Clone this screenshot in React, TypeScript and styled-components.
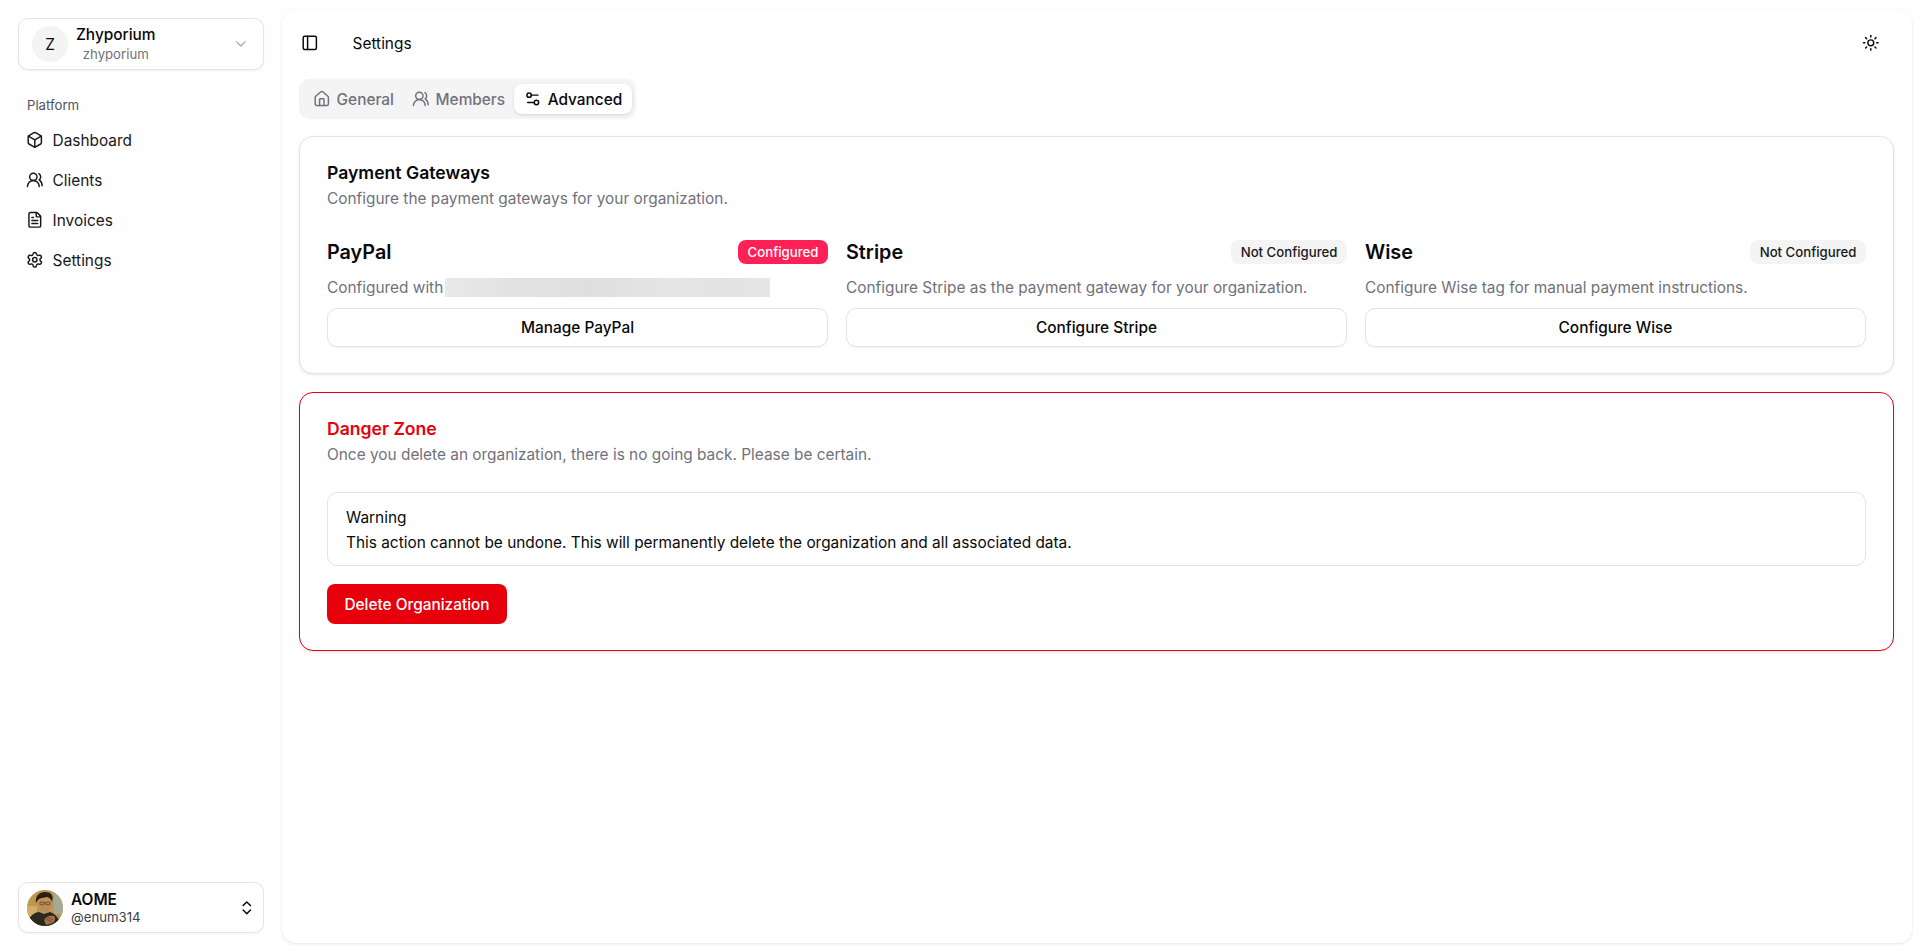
import React from 'react';
import styled, { createGlobalStyle } from 'styled-components';
import {
    Box,
    ChevronDown,
    ChevronsUpDown,
    FileText,
    House,
    PanelLeft,
    Settings,
    Settings2,
    Sun,
    UsersRound,
} from 'lucide-react';

const GlobalStyle = createGlobalStyle`
    html, body {
        margin: 0;
        padding: 0;
        background: #fefefe;
        color: #09090b;
        font-family: Inter, "Liberation Sans", sans-serif;
    }
    * {
        box-sizing: border-box;
    }
`;

const Layout = styled.div`
    display: flex;
    height: 951px;
    overflow: hidden;
`;

const Sidebar = styled.aside`
    width: 282px;
    flex-shrink: 0;
    display: flex;
    flex-direction: column;
    padding: 18px 18px 18px 18px;
`;

const TeamCard = styled.div`
    display: flex;
    align-items: center;
    height: 52px;
    padding: 0 13px;
    background: #fff;
    border: 1px solid #e4e4e7;
    border-radius: 10px;
    box-shadow: 0 1px 2px rgba(0, 0, 0, 0.06);
    color: #a1a1aa;
`;

const TeamAvatar = styled.div`
    width: 36px;
    height: 36px;
    border-radius: 50%;
    background: #f4f4f5;
    color: #09090b;
    display: flex;
    align-items: center;
    justify-content: center;
    font-size: 15.4px;
    flex-shrink: 0;
`;

const TeamText = styled.div`
    display: flex;
    flex-direction: column;
    align-items: center;
    margin-left: 8px;
    flex: 0 0 auto;
`;

const TeamName = styled.div`
    font-size: 15.4px;
    line-height: 20px;
    font-weight: 500;
    color: #09090b;
`;

const TeamSlug = styled.div`
    font-size: 13.2px;
    line-height: 18px;
    color: #71717b;
`;

const PushRight = styled.div`
    margin-left: auto;
    display: flex;
`;

const SectionLabel = styled.div`
    margin: 26px 0 0 9px;
    font-size: 13.2px;
    line-height: 18px;
    color: #52525b;
`;

const NavList = styled.nav`
    display: flex;
    flex-direction: column;
    margin-top: 6px;
`;

const NavItem = styled.a`
    display: flex;
    align-items: center;
    gap: 9px;
    height: 40px;
    padding-left: 8px;
    font-size: 15.4px;
    color: #18181b;
`;

const UserCard = styled.div`
    display: flex;
    align-items: center;
    height: 51px;
    margin-top: auto;
    padding: 0 7px 0 8px;
    background: #fff;
    border: 1px solid #e4e4e7;
    border-radius: 10px;
    box-shadow: 0 1px 2px rgba(0, 0, 0, 0.04);
`;

const UserText = styled.div`
    margin-left: 8px;
`;

const UserName = styled.div`
    font-size: 15.4px;
    line-height: 18px;
    font-weight: 600;
`;

const UserHandle = styled.div`
    font-size: 13.2px;
    line-height: 16px;
    color: #3f3f46;
`;

const Main = styled.main`
    flex: 1;
    margin: 10px 8px 8px 0;
    background: #fff;
    border-radius: 14px;
    box-shadow: 0 1px 3px rgba(0, 0, 0, 0.1);
    padding: 0 18px 0 17px;
    display: flex;
    flex-direction: column;
`;

const Topbar = styled.header`
    display: flex;
    align-items: center;
    height: 66px;
    padding: 0 14px 0 2px;
`;

const PageTitle = styled.div`
    margin-left: 34px;
    font-size: 15.4px;
`;

const TabList = styled.div`
    display: flex;
    align-self: flex-start;
    height: 40px;
    margin-top: 3px;
    padding: 5px 4px 5px 5px;
    background: #f4f4f5;
    border-radius: 10px;
`;

const Tab = styled.button<{ $active?: boolean }>`
    display: flex;
    align-items: center;
    gap: 6px;
    height: 30px;
    padding: 0 ${(p) => (p.$active ? '10px' : '9px')};
    border: 0;
    border-radius: 8px;
    background: ${(p) => (p.$active ? '#fff' : 'transparent')};
    box-shadow: ${(p) => (p.$active ? '0 1px 3px rgba(0,0,0,0.12)' : 'none')};
    color: ${(p) => (p.$active ? '#09090b' : '#71717b')};
    font-family: inherit;
    font-size: 15.4px;
    font-weight: 500;
`;

const Card = styled.section<{ $danger?: boolean }>`
    border: 1px solid ${(p) => (p.$danger ? '#e7000b' : '#e4e4e7')};
    border-radius: 14px;
    box-shadow: 0 1px 3px rgba(0, 0, 0, 0.1);
    padding: 24px 27px 26px;
    background: #fff;
`;

const FirstCard = styled(Card)`
    margin-top: 17px;
`;

const DangerCard = styled(Card)`
    margin-top: 18px;
    height: 259px;
`;

const CardTitle = styled.h2<{ $danger?: boolean }>`
    margin: 0;
    font-size: 17.6px;
    line-height: 24px;
    font-weight: 600;
    color: ${(p) => (p.$danger ? '#e7000b' : '#09090b')};
`;

const CardSub = styled.p`
    margin: 2px 0 0;
    font-size: 15.4px;
    line-height: 24px;
    color: #71717b;
`;

const GatewayGrid = styled.div`
    display: grid;
    grid-template-columns: repeat(3, 1fr);
    gap: 18px;
    margin-top: 29px;
`;

const Gateway = styled.div`
    display: flex;
    flex-direction: column;
`;

const GatewayHead = styled.div`
    display: flex;
    align-items: center;
    justify-content: space-between;
    height: 24px;
`;

const GatewayName = styled.div`
    font-size: 19.8px;
    font-weight: 600;
`;

const Badge = styled.span<{ $on?: boolean }>`
    display: inline-flex;
    align-items: center;
    height: 24px;
    padding: 0 9.6px;
    border-radius: 8px;
    font-size: 13.2px;
    font-weight: 500;
    background: ${(p) => (p.$on ? '#ff2056' : '#f4f4f5')};
    color: ${(p) => (p.$on ? '#fff' : '#18181b')};
`;

const GatewayDesc = styled.div`
    display: flex;
    align-items: center;
    gap: 2px;
    margin-top: 11px;
    height: 24px;
    font-size: 15.4px;
    color: #71717b;
`;

const Redacted = styled.span`
    display: inline-block;
    width: 325px;
    height: 19px;
    background: linear-gradient(90deg, #e9e9eb, #e2e2e4 20%, #dfdfe1 45%, #e5e5e7 70%, #e2e2e4 85%, #e6e6e8);
`;

const OutlineButton = styled.button`
    height: 39px;
    margin-top: 9px;
    background: #fff;
    border: 1px solid #e4e4e7;
    border-radius: 10px;
    box-shadow: 0 1px 2px rgba(0, 0, 0, 0.05);
    font-family: inherit;
    font-size: 15.4px;
    font-weight: 500;
    color: #09090b;
`;

const WarningBox = styled.div`
    margin-top: 25px;
    height: 74px;
    padding: 12px 18px;
    border: 1px solid #e4e4e7;
    border-radius: 10px;
    font-size: 15.4px;
    line-height: 25px;
    color: #09090b;
`;

const DeleteButton = styled.button`
    display: block;
    width: 180px;
    height: 40px;
    margin-top: 18px;
    background: #e7000b;
    border: 0;
    border-radius: 8px;
    font-family: inherit;
    font-size: 15.4px;
    font-weight: 500;
    color: #fff;
`;

const nav = [
    { label: 'Dashboard', icon: Box },
    { label: 'Clients', icon: UsersRound },
    { label: 'Invoices', icon: FileText },
    { label: 'Settings', icon: Settings },
];

// hand drawn stand-in for the profile photo
const Portrait = () => (
    <svg width="36" height="36" viewBox="0 0 36 36" style={{ flexShrink: 0 }}>
        <defs>
            <clipPath id="portrait">
                <circle cx="18" cy="18" r="18" />
            </clipPath>
        </defs>
        <g clipPath="url(#portrait)">
            <rect width="36" height="36" fill="#bd9650" />
            <rect x="27" width="9" height="24" fill="#a5aa98" />
            <rect x="0" y="16" width="10" height="10" fill="#d0ae6c" />
            <path d="M0 36c1-8 5-13 12-14l5 2 6-2c5 2 9 5 11 14z" fill="#2c271f" />
            <path d="M12 12c0 6 2 10 6 10s6-4 6-10z" fill="#b98a5e" />
            <path d="M9 13c-1-7 3-11 9-11s9 3 7 10c-1-3-2-4-5-5-3 1-7 1-8 2-1 1-2 2-3 4z" fill="#2a1f17" />
            <path d="M13 12h4v2.6h-4zM19 12h4v2.6h-4zM17 12.8h2" fill="none" stroke="#4a3a2c" strokeWidth="0.6" />
            <path d="M17 30c2-4 6-5 10-4 2 2 1 5-1 7l-7 2z" fill="#a0704a" />
            <path d="M19 29l6 3M20 27l6 3" stroke="#5e3f28" strokeWidth="0.6" />
        </g>
    </svg>
);

const App = () => {
    return (
        <>
            <GlobalStyle />
            <Layout>
                <Sidebar>
                    <TeamCard>
                        <TeamAvatar>Z</TeamAvatar>
                        <TeamText>
                            <TeamName>Zhyporium</TeamName>
                            <TeamSlug>zhyporium</TeamSlug>
                        </TeamText>
                        <PushRight>
                            <ChevronDown size={17.6} strokeWidth={1.5} />
                        </PushRight>
                    </TeamCard>
                    <SectionLabel>Platform</SectionLabel>
                    <NavList>
                        {nav.map((item) => (
                            <NavItem key={item.label}>
                                <item.icon size={17.6} strokeWidth={2} />
                                {item.label}
                            </NavItem>
                        ))}
                    </NavList>
                    <UserCard>
                        <Portrait />
                        <UserText>
                            <UserName>AOME</UserName>
                            <UserHandle>@enum314</UserHandle>
                        </UserText>
                        <PushRight>
                            <ChevronsUpDown size={17.6} strokeWidth={2} />
                        </PushRight>
                    </UserCard>
                </Sidebar>
                <Main>
                    <Topbar>
                        <PanelLeft size={17.6} strokeWidth={2} />
                        <PageTitle>Settings</PageTitle>
                        <PushRight>
                            <Sun size={17.6} strokeWidth={2} />
                        </PushRight>
                    </Topbar>
                    <TabList>
                        <Tab>
                            <House size={17.6} strokeWidth={2} />
                            General
                        </Tab>
                        <Tab>
                            <UsersRound size={17.6} strokeWidth={2} />
                            Members
                        </Tab>
                        <Tab $active>
                            <Settings2 size={17.6} strokeWidth={2} />
                            Advanced
                        </Tab>
                    </TabList>
                    <FirstCard>
                        <CardTitle>Payment Gateways</CardTitle>
                        <CardSub>Configure the payment gateways for your organization.</CardSub>
                        <GatewayGrid>
                            <Gateway>
                                <GatewayHead>
                                    <GatewayName>PayPal</GatewayName>
                                    <Badge $on>Configured</Badge>
                                </GatewayHead>
                                <GatewayDesc>
                                    Configured with <Redacted />
                                </GatewayDesc>
                                <OutlineButton>Manage PayPal</OutlineButton>
                            </Gateway>
                            <Gateway>
                                <GatewayHead>
                                    <GatewayName>Stripe</GatewayName>
                                    <Badge>Not Configured</Badge>
                                </GatewayHead>
                                <GatewayDesc>Configure Stripe as the payment gateway for your organization.</GatewayDesc>
                                <OutlineButton>Configure Stripe</OutlineButton>
                            </Gateway>
                            <Gateway>
                                <GatewayHead>
                                    <GatewayName>Wise</GatewayName>
                                    <Badge>Not Configured</Badge>
                                </GatewayHead>
                                <GatewayDesc>Configure Wise tag for manual payment instructions.</GatewayDesc>
                                <OutlineButton>Configure Wise</OutlineButton>
                            </Gateway>
                        </GatewayGrid>
                    </FirstCard>
                    <DangerCard $danger>
                        <CardTitle $danger>Danger Zone</CardTitle>
                        <CardSub>Once you delete an organization, there is no going back. Please be certain.</CardSub>
                        <WarningBox>
                            <div>Warning</div>
                            <div>This action cannot be undone. This will permanently delete the organization and all associated data.</div>
                        </WarningBox>
                        <DeleteButton>Delete Organization</DeleteButton>
                    </DangerCard>
                </Main>
            </Layout>
        </>
    );
};

export default App;
